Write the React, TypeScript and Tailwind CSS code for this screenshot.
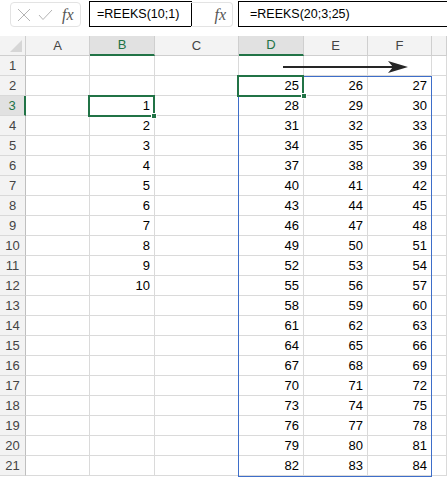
import React from "react";

const GREEN = "#217346";
const cols = [
  { key: "A", w: "w-[64px]" },
  { key: "B", w: "w-[65px]" },
  { key: "C", w: "w-[84px]" },
  { key: "D", w: "w-[65px]" },
  { key: "E", w: "w-[64px]" },
  { key: "F", w: "w-[64px]" },
  { key: "G", w: "flex-1" },
];

function cellValue(row: number, col: string): string {
  if (col === "B" && row >= 3 && row <= 12) return String(row - 2);
  const idx = ["D", "E", "F"].indexOf(col);
  if (idx >= 0 && row >= 2) return String(25 + (row - 2) * 3 + idx);
  return "";
}

function FormulaBar() {
  return (
    <div className="flex h-[28px] items-start pt-[1px]">
      <div className="ml-[10px] mt-[1px] flex h-[25px] w-[71px] items-center rounded-[4px] border border-[#e3e3e3]">
        <svg width="14" height="14" viewBox="0 0 14 14" className="ml-[6px]">
          <path d="M1 1L13 13M13 1L1 13" stroke="#b4b4b4" strokeWidth="1" fill="none" />
        </svg>
        <svg width="15" height="12" viewBox="0 0 15 12" className="ml-[7px]">
          <path d="M1 6L5 10.5L14 1" stroke="#b4b4b4" strokeWidth="1" fill="none" />
        </svg>
        <span className="ml-[9px] font-['Liberation_Serif',serif] text-[16px] italic leading-none text-[#555]">
          fx
        </span>
      </div>
      <div className="ml-[8px] flex h-[26px] w-[103px] items-center border border-black bg-white pl-[7px] font-['Liberation_Sans',sans-serif] text-[12.5px] text-black">
        =REEKS(10;1)
      </div>
      <div className="-ml-[1px] mt-[1px] flex h-[25px] w-[42px] items-center justify-end rounded-r-[4px] border border-l-0 border-[#e3e3e3] pr-[6px]">
        <span className="font-['Liberation_Serif',serif] text-[16px] italic leading-none text-[#555]">fx</span>
      </div>
      <div className="ml-[5px] flex h-[26px] flex-1 items-center border border-r-0 border-black bg-white pl-[11px] font-['Liberation_Sans',sans-serif] text-[12.5px] text-black">
        =REEKS(20;3;25)
      </div>
    </div>
  );
}

function HeaderRow() {
  return (
    <div className="flex h-[20px]">
      <div className="relative h-[20px] w-[26px] border-r border-b border-[#cfcfcf] bg-[#f3f3f3]">
        <svg width="12" height="12" viewBox="0 0 12 12" className="absolute right-[3px] bottom-[3px]">
          <path d="M12 0L12 12L0 12Z" fill="#d6d6d6" />
        </svg>
      </div>
      {cols.map((c) => {
        const sel = c.key === "B" || c.key === "D";
        return (
          <div
            key={c.key}
            className={`${c.w} flex h-[20px] items-center justify-center border-r text-[13px] ${
              sel
                ? "border-b-2 border-r-[#cfcfcf] border-b-[#217346] bg-[#e1e1e1] text-[#217346]"
                : "border-b border-[#cfcfcf] bg-[#f3f3f3] text-[#444]"
            }`}
          >
            {c.key === "G" ? "" : c.key}
          </div>
        );
      })}
    </div>
  );
}

function Row({ n }: { n: number }) {
  const sel = n === 3;
  return (
    <div className="flex h-[20px]">
      <div
        className={`flex h-[20px] w-[26px] items-center justify-center border-b border-[#d9d9d9] text-[13px] ${
          sel
            ? "border-r-2 border-r-[#217346] bg-[#e1e1e1] text-[#217346]"
            : "border-r border-r-[#bfbfbf] bg-[#f3f3f3] text-[#444]"
        }`}
      >
        {n}
      </div>
      {cols.map((c) => (
        <div
          key={c.key}
          className={`${c.w} flex h-[20px] items-center justify-end border-r border-b border-[#dadada] pr-[4px] pt-[1px] text-[13px] text-black`}
        >
          {cellValue(n, c.key)}
        </div>
      ))}
    </div>
  );
}

export default function App() {
  const rows = Array.from({ length: 21 }, (_, i) => i + 1);
  return (
    <div className="relative h-[478px] w-[447px] overflow-hidden bg-white font-['Liberation_Sans',sans-serif]">
      <FormulaBar />
      <div className="mt-[8px]">
        <HeaderRow />
        {rows.map((n) => (
          <Row key={n} n={n} />
        ))}
      </div>

      {/* spill range D2:F21 */}
      <div className="absolute left-[238px] top-[76px] h-[401px] w-[194px] border border-[#3e6ec9]" />

      {/* active cell B3 */}
      <div className="absolute left-[88px] top-[95px] h-[22px] w-[67px] border-2 border-[#217346]" />
      <div className="absolute left-[151px] top-[113px] h-[6px] w-[6px] border border-white bg-[#217346]" />

      {/* D2 selection */}
      <div className="absolute left-[237px] top-[75px] h-[22px] w-[67px] border-2 border-[#217346]" />
      <div className="absolute left-[301px] top-[93px] h-[6px] w-[6px] border border-white bg-[#217346]" />

      {/* fill direction arrow */}
      <svg width="130" height="16" viewBox="0 0 130 16" className="absolute left-[282px] top-[59px]">
        <path d="M1 8H112" stroke="#262626" strokeWidth="2" />
        <path d="M106 2L126 8L106 14L111 8Z" fill="#262626" />
      </svg>
    </div>
  );
}
